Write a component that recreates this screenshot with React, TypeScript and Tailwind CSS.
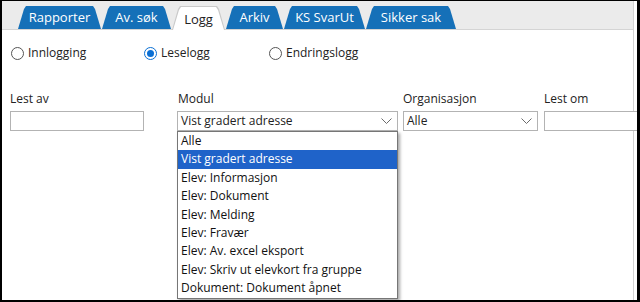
const tabs = [
  { label: "Rapporter", w: "w-[83px]" },
  { label: "Av. søk", w: "w-[69px]" },
  { label: "Logg", w: "w-[53px]", active: true },
  { label: "Arkiv", w: "w-[57px]" },
  { label: "KS SvarUt", w: "w-[81px]" },
  { label: "Sikker sak", w: "w-[90px]" },
];

const moduler = [
  "Alle",
  "Vist gradert adresse",
  "Elev: Informasjon",
  "Elev: Dokument",
  "Elev: Melding",
  "Elev: Fravær",
  "Elev: Av. excel eksport",
  "Elev: Skriv ut elevkort fra gruppe",
  "Dokument: Dokument åpnet",
];

const tabShape =
  "[clip-path:polygon(0_100%,6px_3px,8px_0,calc(100%-8px)_0,calc(100%-6px)_3px,100%_100%)]";

function Tab({ label, w, active }: { label: string; w: string; active?: boolean }) {
  if (active) {
    return (
      <div className={`relative ${w} h-[24px] -mb-px bg-[#c9c9c9] ${tabShape}`}>
        <div className={`absolute inset-x-px top-px bottom-0 bg-white ${tabShape} flex items-center justify-center text-[13px] text-[#222] pt-[2px]`}>
          {label}
        </div>
      </div>
    );
  }
  return (
    <div className={`${w} h-[23px] bg-[#1570b8] ${tabShape} flex items-center justify-center text-[13px] text-white pt-[1px]`}>
      {label}
    </div>
  );
}

function Radio({ label, checked, w }: { label: string; checked?: boolean; w: string }) {
  return (
    <label className={`${w} flex items-center gap-[4px] h-[18px]`}>
      {checked ? (
        <span className="w-[13px] h-[13px] rounded-full border border-[#0a6fd4] bg-white flex items-center justify-center">
          <span className="w-[7px] h-[7px] rounded-full bg-[#0a6fd4]" />
        </span>
      ) : (
        <span className="w-[13px] h-[13px] rounded-full border border-[#555] bg-white" />
      )}
      <span className="text-[12px] text-[#222]">{label}</span>
    </label>
  );
}

function Chevron() {
  return (
    <svg width="11" height="7" viewBox="0 0 11 7" className="shrink-0">
      <path d="M0.5 0.5 L5.5 5.5 L10.5 0.5" fill="none" stroke="#6b6b6b" strokeWidth="1" />
    </svg>
  );
}

export default function App() {
  return (
    <div className="w-[640px] h-[302px] bg-white border-l-2 border-t border-b-2 border-r-[3px] border-black overflow-hidden font-['Open_Sans',sans-serif]">
      <div className="w-[632px] h-full border-r border-[#d2d2d2] flex flex-col">
        {/* fanerad */}
        <div className="h-[29px] bg-[#ebebeb] border-b border-[#d4d4d4] flex items-end pl-[16px] gap-[1px]">
          {tabs.map((t) => (
            <Tab key={t.label} {...t} />
          ))}
        </div>

        {/* loggtype */}
        <div className="flex items-center mt-[14px] pl-[9px]">
          <Radio label="Innlogging" w="w-[133px]" />
          <Radio label="Leselogg" w="w-[125px]" checked />
          <Radio label="Endringslogg" w="w-[130px]" />
        </div>

        {/* filter */}
        <div className="flex mt-[29px] pl-[8px] text-[12px] text-[#222]">
          <div className="w-[134px] shrink-0">
            <div className="h-[16px] leading-[16px] mb-[4px]">Lest av</div>
            <div className="h-[20px] border border-[#b3b3b3] bg-white" />
          </div>
          <div className="relative w-[221px] shrink-0 ml-[33px]">
            <div className="h-[16px] leading-[16px] mb-[4px] pl-px">Modul</div>
            <div className="h-[20px] border border-[#b3b3b3] bg-white flex items-center justify-between pl-[3px] pr-[5px]">
              <span>Vist gradert adresse</span>
              <Chevron />
            </div>
            <div className="absolute left-0 top-[40px] w-[221px] border border-[#767676] bg-white shadow-[2px_2px_3px_rgba(0,0,0,0.35)] z-10">
              {moduler.map((m, i) => (
                <div
                  key={m}
                  className={`h-[18.4px] leading-[18px] pl-[3px] ${i === 1 ? "bg-[#1f63c9] text-white" : "text-[#111]"}`}
                >
                  {m}
                </div>
              ))}
            </div>
          </div>
          <div className="w-[135px] shrink-0 ml-[5px]">
            <div className="h-[16px] leading-[16px] mb-[4px]">Organisasjon</div>
            <div className="h-[20px] border border-[#b3b3b3] bg-white flex items-center justify-between pl-[3px] pr-[5px]">
              <span>Alle</span>
              <Chevron />
            </div>
          </div>
          <div className="w-[120px] shrink-0 ml-[6px]">
            <div className="h-[16px] leading-[16px] mb-[4px]">Lest om</div>
            <div className="h-[20px] border border-[#b3b3b3] bg-white" />
          </div>
        </div>
      </div>
    </div>
  );
}
